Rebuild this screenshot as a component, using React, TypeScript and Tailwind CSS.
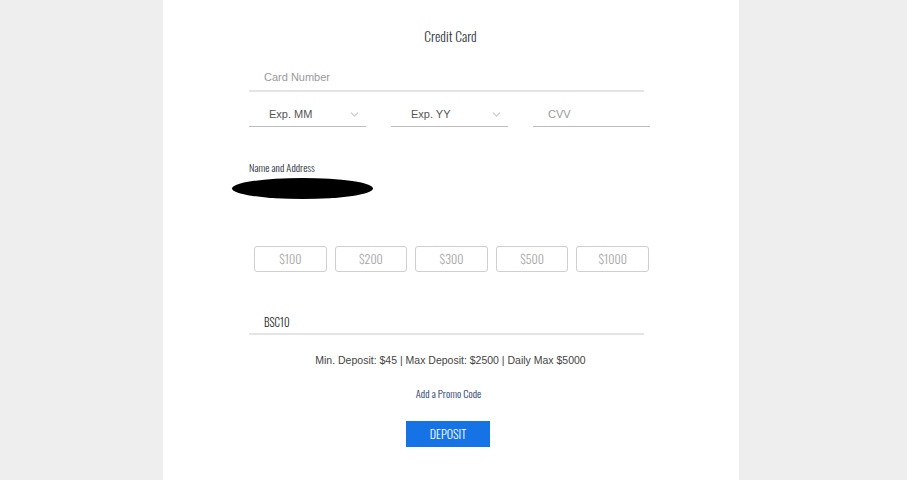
import { ChevronDown } from 'lucide-react';

const cond = "font-['Oswald','Liberation_Sans_Narrow','DejaVu_Sans_Condensed','Roboto_Condensed',sans-serif]";
const arial = "font-['Liberation_Sans',Arial,sans-serif]";

const amounts = ['$100', '$200', '$300', '$500', '$1000'];

export default function App() {
  return (
    <div className="min-h-[480px] w-full bg-[#eeeeee]">
      <div className="ml-[163px] min-h-[480px] w-[576px] bg-white pl-[86px] pt-[26px]">
        {/* Header */}
        <h2 className={`${cond} w-[403px] text-center text-[13.5px] font-[350] leading-[20px] text-[#333a44]`}>Credit Card</h2>

        {/* Card number */}
        <div className={`${arial} mt-[24px] w-[395px] border-b-2 border-[#e4e4e4] pb-[6px] pl-[15px] text-[11px] leading-[14px] text-[#9a9a9a]`}>
          Card Number
        </div>

        {/* Expiry / CVV */}
        <div className="mt-[15px] flex w-[401px] gap-[25px]">
          {['Exp. MM', 'Exp. YY'].map((label) => (
            <div
              key={label}
              className={`${arial} flex h-[20px] w-[117px] items-start justify-between border-b border-[#bdbdbd] pl-[20px] pr-[5px] text-[11px] leading-[14px] text-[#555]`}
            >
              <span>{label}</span>
              <ChevronDown className="mt-[1px] h-[13px] w-[13px] text-[#c8c8c8]" strokeWidth={2} />
            </div>
          ))}
          <div className={`${arial} h-[20px] w-[117px] border-b border-[#bdbdbd] pl-[15px] text-[11px] leading-[14px] text-[#999]`}>
            CVV
          </div>
        </div>

        {/* Name and Address */}
        <div className={`${cond} mt-[33px] text-[10.5px] font-[350] leading-[14px] text-[#2a2f3a]`}>Name and Address</div>
        <div className="ml-[-17px] mt-[4px] h-[21px] w-[141px] rounded-[50%] bg-black" />

        {/* Amounts */}
        <div className="mt-[47px] flex w-[400px] gap-[8px] pl-[5px]">
          {amounts.map((a) => (
            <button
              key={a}
              className={`${cond} h-[26px] w-[73px] rounded-[3px] border border-[#cfcfcf] bg-white text-[12px] font-[350] leading-[14px] text-[#a3a3a3]`}
            >
              {a}
            </button>
          ))}
        </div>

        {/* Promo input */}
        <div className={`${cond} mt-[43px] w-[395px] border-b-2 border-[#e4e4e4] pb-[4px] pl-[15px] text-[11px] font-[350] leading-[14px] text-[#222]`}>
          BSC10
        </div>

        <p className={`${arial} mt-[18px] w-[403px] text-center text-[10.5px] leading-[14px] text-[#444]`}>
          Min. Deposit: $45 | Max Deposit: $2500 | Daily Max $5000
        </p>

        <p className={`${cond} mt-[19px] w-[399px] text-center text-[10.5px] font-[350] leading-[14px] text-[#1f3a6e]`}>
          Add a Promo Code
        </p>

        <div className="mt-[21px] flex w-[398px] justify-center">
          <button className={`${cond} h-[26px] w-[84px] bg-[#1673e6] text-[12px] font-[350] leading-[14px] text-white`}>DEPOSIT</button>
        </div>
      </div>
    </div>
  );
}
